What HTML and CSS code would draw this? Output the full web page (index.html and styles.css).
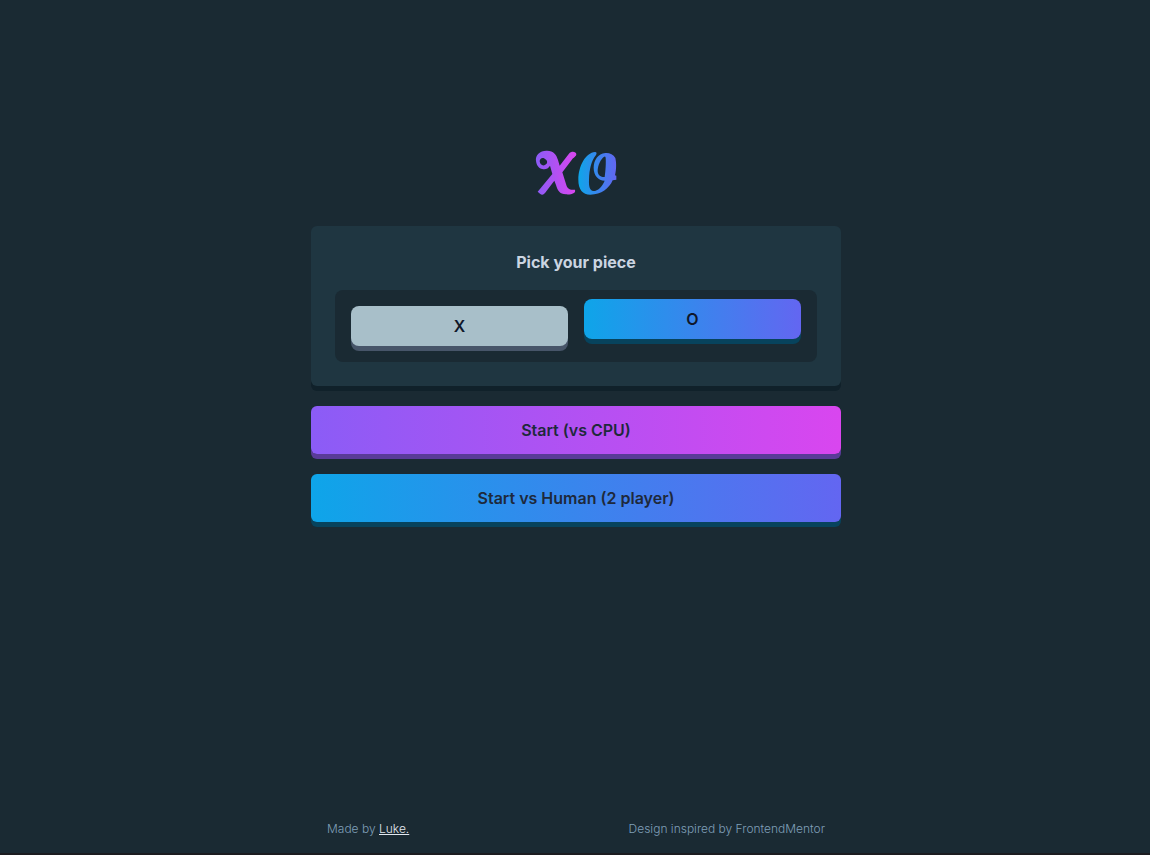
FILE: index.html
```html
<!DOCTYPE html>
<html lang="en">
<head>
<meta charset="utf-8">
<meta name="viewport" content="width=device-width, initial-scale=1">
<title>XO</title>
<link rel="stylesheet" href="styles.css">
</head>
<body>
<div class="page">
  <main class="menu">
    <svg class="logo" viewBox="0 0 300 198" role="img" aria-label="XO">
      <defs>
        <linearGradient id="violet" gradientUnits="userSpaceOnUse" x1="30" y1="0" x2="150" y2="0"><stop offset="0" stop-color="#8b5cf6"/><stop offset="1" stop-color="#d946ef"/></linearGradient>
        <linearGradient id="sky" gradientUnits="userSpaceOnUse" x1="157" y1="0" x2="271" y2="0"><stop offset="0" stop-color="#0ea5e9"/><stop offset="1" stop-color="#6366f1"/></linearGradient>
      </defs>
      <path fill="url(#violet)" fill-rule="evenodd" d="M30 63C27 45 42 32 61 32C82 31 91 43 96 60L101 77L130 40C137 32 151 35 151 43C151 49 142 53 137 60L109 97L120 132C123 145 130 151 147 149C150 160 137 164 120 163C100 162 95 151 90 135L85 122L61 154C54 165 48 167 42 161L35 155L79 102L72 77C67 86 58 89 49 87C39 86 32 77 30 63ZM41 64C42 74 50 79 57 75C66 71 65 62 58 58C51 50 41 55 41 64Z"/>
      <path fill="url(#sky)" fill-rule="evenodd" d="M207 36C179 38 157 78 157 119C157 148 170 164 193 164C226 164 250 145 260 121L271 119V107L267 106C272 87 271 66 268 54C262 43 250 38 238 39C216 41 203 61 203 83C203 106 216 121 236 122C228 141 216 153 202 153C191 151 188 139 189 119C190 87 196 62 210 45C213 39 212 36 207 36ZM235 50C225 55 215 76 215 94C216 108 227 112 236 111C239 91 240 67 239 53Q238 49 235 50Z"/>
    </svg>
    <section class="card" aria-labelledby="pick">
      <h1 class="card-title" id="pick">Pick your piece</h1>
      <div class="pieces">
        <button class="button piece piece-plain" type="button">X</button>
        <button class="button piece piece-selected sky" type="button" aria-pressed="true">O</button>
      </div>
    </section>
    <button class="button start violet" type="button">Start (vs CPU)</button>
    <button class="button start sky" type="button">Start vs Human (2 player)</button>
  </main>
  <footer class="footer">
    <p class="credit">Made by <a class="link" href="#">Luke.</a></p>
    <p class="credit">Design inspired by FrontendMentor</p>
  </footer>
</div>
</body>
</html>
```
FILE: styles.css
```css
* {
  box-sizing: border-box;
}

html {
  background: #1c1c20;
}

body {
  margin: 0;
  padding-bottom: 2px;
  font-family: Inter, "Liberation Sans", sans-serif;
  font-size: 16px;
  line-height: 24px;
}

.page {
  display: flex;
  flex-direction: column;
  align-items: center;
  justify-content: space-between;
  min-height: calc(100vh - 2px);
  padding: 140px 0 16px 2px;
  background: #1a2a33;
}

.menu {
  display: flex;
  flex-direction: column;
  gap: 20px;
  width: 100%;
  max-width: 530px;
}

.logo {
  width: 100px;
  height: 66px;
  align-self: center;
}

.card {
  display: flex;
  flex-direction: column;
  gap: 16px;
  padding: 24px;
  border-radius: 6px;
  background: #1f3641;
  box-shadow: 0 5px 0 #10212a;
}

.card-title {
  margin: 0;
  color: #cbd5e1;
  font-size: 16px;
  font-weight: 700;
  text-align: center;
}

.pieces {
  display: grid;
  grid-template-columns: 1fr 1fr;
  gap: 16px;
  padding: 16px;
  border-radius: 8px;
  background: #1a2a33;
}

.button {
  border: 0;
  border-radius: 6px;
  color: #1e293b;
  font: inherit;
  font-weight: 600;
  cursor: pointer;
}

.piece {
  height: 40px;
  border-radius: 8px;
  color: #0f172a;
}

.piece-plain {
  background: #a8bfc9;
  box-shadow: 0 5px 0 #475569;
}

.piece-selected {
  transform: translateY(-7px);
}

.start {
  height: 48px;
}

.violet {
  background: linear-gradient(to right, #8b5cf6, #d946ef);
  box-shadow: 0 5px 0 #593b98;
}

.sky {
  background: linear-gradient(to right, #0ea5e9, #6366f1);
  box-shadow: 0 5px 0 #07435d;
}

.footer {
  display: flex;
  justify-content: space-between;
  width: 100%;
  max-width: 530px;
  padding: 0 16px;
}

.credit {
  margin: 0;
  color: #7f9fb8;
  font-size: 12px;
  font-weight: 300;
  line-height: 16px;
}

.link {
  color: #e2e8f0;
}
```
